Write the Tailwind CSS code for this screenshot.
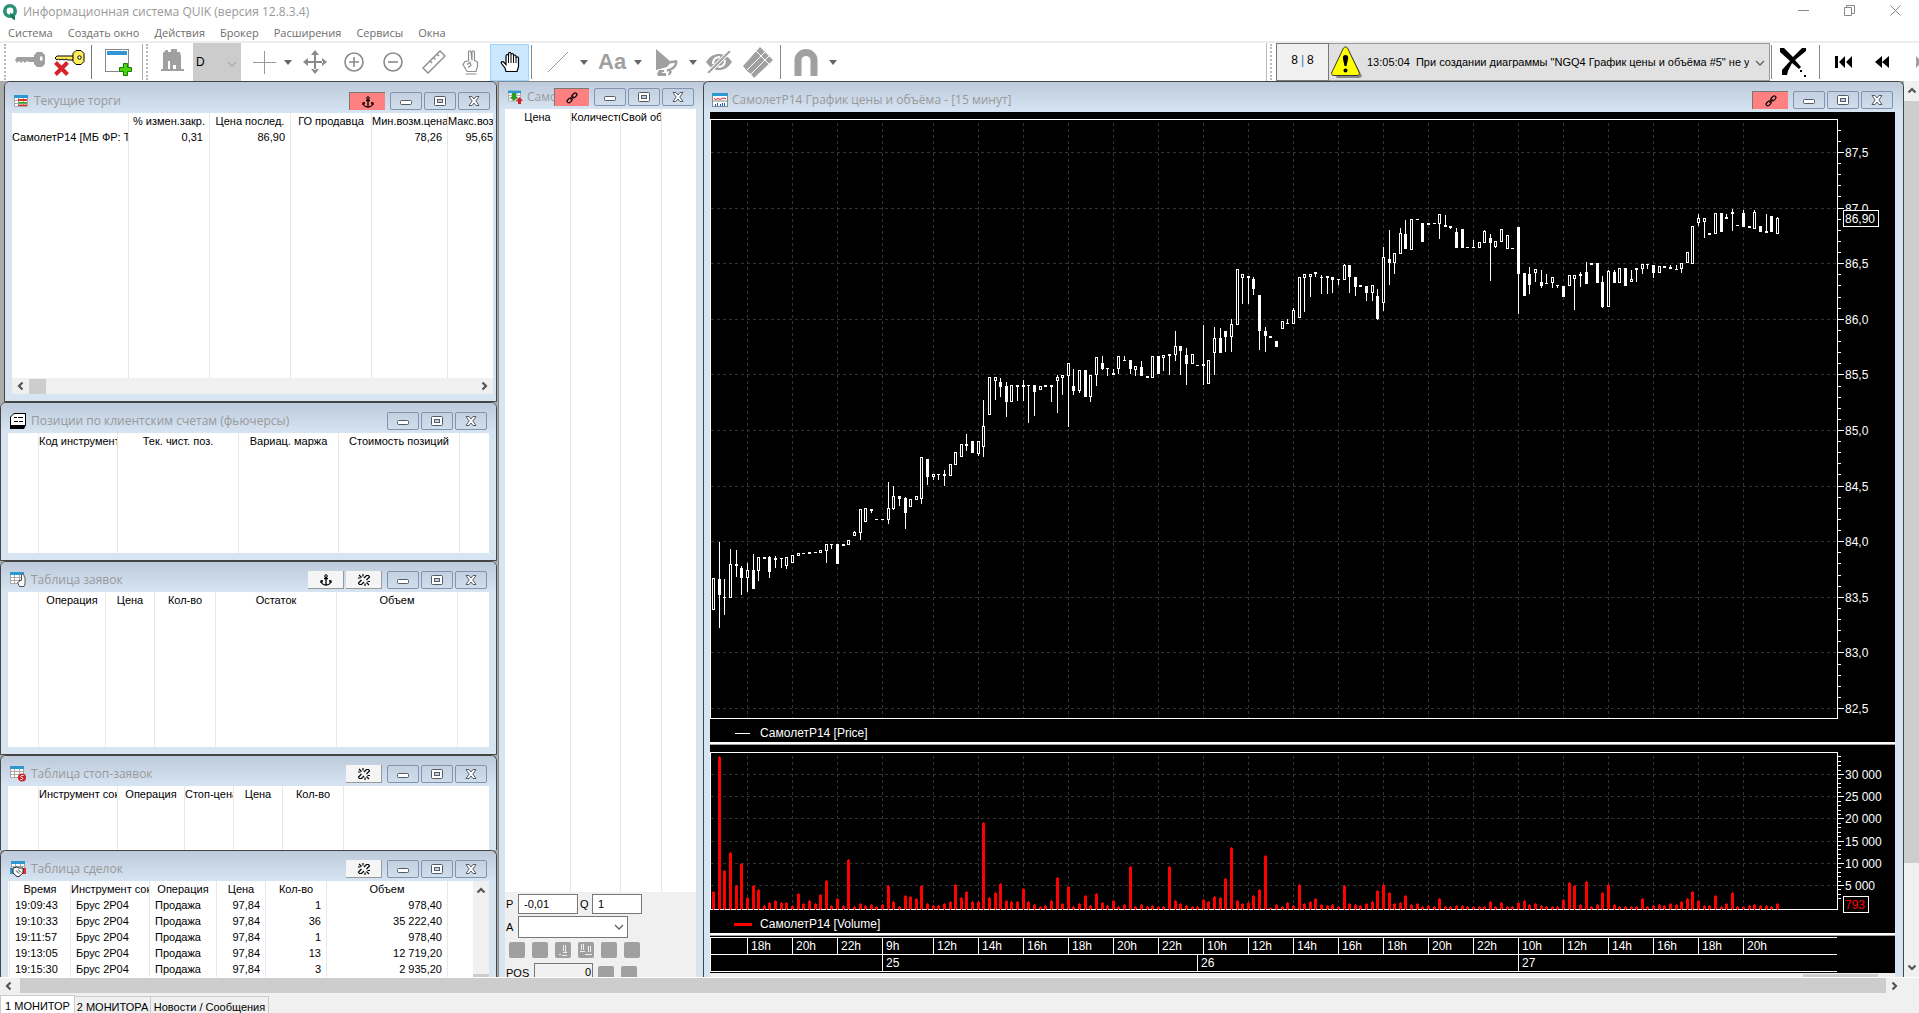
<!DOCTYPE html>
<html lang="ru">
<head>
  <meta charset="UTF-8">
  <meta name="viewport" content="width=device-width, initial-scale=1.0">
  <title>Информационная система QUIK</title>
  <script src="https://cdn.jsdelivr.net/npm/@tailwindcss/browser@4"></script>
</head>
<body class="h-screen flex flex-col overflow-hidden bg-white text-black text-[11px] leading-4 font-['Liberation_Sans',Arial,sans-serif]">

  <!-- icon sprites -->
  <svg class="hidden">
    <symbol id="i-anchor" viewBox="0 0 12 12"><path d="M6 3v8M4 4.500h4M1.500 7.500c0 2 2 3.500 4.500 3.500s4.500-1.500 4.500-3.500M1 9V7h2M11 9V7H9" fill="none" stroke="#000" stroke-width="1.300"/><circle cx="6" cy="2" r="1.300" fill="none" stroke="#000"/></symbol>
    <symbol id="i-link" viewBox="0 0 12 12"><g fill="none" stroke="#000" stroke-width="1.200"><rect x="-2.800" y="-1.700" width="5.600" height="3.400" rx="1.700" transform="translate(8.400 3.400) rotate(-45)"/><rect x="-2.800" y="-1.700" width="5.600" height="3.400" rx="1.700" transform="translate(3.600 8.400) rotate(-45)"/><path d="M4.500 7.500l3-3"/></g></symbol>
    <symbol id="i-unlink" viewBox="0 0 14 12"><g fill="none" stroke="#000" stroke-width="1.200"><path d="M7 4l2.500-2.500h2L12.500 3l-3 3M7 8l-2.500 2.500h-2L1.500 9l3-3M2 1l2.500 2.500M6 0v2.500M1 4h2.500M9.500 8.500L12 11M8 9.500V12M10.500 7.500H13"/></g></symbol>
    <symbol id="i-min" viewBox="0 0 12 12"><rect x=".5" y="5.500" width="11" height="4" rx="1" fill="#fff" stroke="#555b66"/></symbol>
    <symbol id="i-max" viewBox="0 0 12 12"><rect x=".5" y="1.500" width="11" height="9" rx="1" fill="#fff" stroke="#555b66"/><rect x="3.500" y="4.500" width="5" height="3" fill="#c3d1e2" stroke="#555b66"/></symbol>
    <symbol id="i-close" viewBox="0 0 12 12"><path d="M1 1.500h3l2 2.500 2-2.500h3L7.800 6l3.200 4.500H8L6 8l-2 2.500H1L4.200 6z" fill="#fff" stroke="#555b66"/></symbol>
    <symbol id="i-down" viewBox="0 0 8 5"><path d="M0 0h8L4 5z" fill="#666"/></symbol>
    <symbol id="i-chev" viewBox="0 0 10 10"><path d="M1 3l4 4 4-4" fill="none" stroke="currentColor" stroke-width="1.300"/></symbol>
    <symbol id="i-arrow" viewBox="0 0 10 10"><path d="M7.500 1.500L4 5l3.500 3.500" fill="none" stroke="#555" stroke-width="2.200"/></symbol>
    <symbol id="i-grid" viewBox="0 0 14 12"><rect width="14" height="12" fill="#fff"/><path d="M.5.500v11h13v-11M4.500 2v10M9.500 2v10M0 5.500h14M0 8.500h14" fill="none" stroke="#a8a8a8"/><rect width="14" height="3" fill="#2f97cf"/></symbol>
  </svg>

  <!-- title bar -->
  <header class="flex h-6 shrink-0 items-center pl-[3px] pr-[18px] font-['Open_Sans','Noto_Sans',sans-serif] text-[12px] text-[#999]">
    <svg class="h-4 w-[14px]" viewBox="0 0 14 16"><circle cx="7" cy="7" r="5.200" fill="none" stroke="#2a9175" stroke-width="3.600"/><path d="M7 8.500l5 4v3.500c-3-.5-5-3.500-5-7.500z" fill="#1c7a5c"/></svg>
    <h1 class="ml-[6px] whitespace-nowrap">Информационная система QUIK (версия 12.8.3.4)</h1>
    <div class="ml-auto flex items-center gap-[35px] pb-1">
      <button aria-label="Свернуть"><svg class="size-[11px]" viewBox="0 0 11 11"><path d="M0 5.500h11" stroke="#888"/></svg></button>
      <button aria-label="Восстановить"><svg class="size-[11px]" viewBox="0 0 11 11" fill="none" stroke="#888"><path d="M.5 2.500h7v8h-7zM2.500 2.500v-2h8v8h-3"/></svg></button>
      <button aria-label="Закрыть"><svg class="size-[11px]" viewBox="0 0 11 11"><path d="M.5.500l10 10M10.500.500l-10 10" stroke="#888"/></svg></button>
    </div>
  </header>

  <nav class="flex h-[17px] shrink-0 items-center gap-[15px] pl-2 font-['Open_Sans','Noto_Sans',sans-serif] text-[11px] text-[#6d6d6d]">
    <a href="#">Система</a><a href="#">Создать окно</a><a href="#">Действия</a><a href="#">Брокер</a><a href="#">Расширения</a><a href="#">Сервисы</a><a href="#">Окна</a>
  </nav>

  <!-- toolbar -->
  <div class="flex h-10 shrink-0 items-center overflow-hidden border-t-2 border-[#ededed]">
    <div class="ml-1 h-9 w-[2px] border-l-2 border-dotted border-[#bbb]"></div>
    <button class="ml-[9px] pb-1" aria-label="Подключиться"><svg class="h-4 w-[30px]" viewBox="0 0 30 16" fill="#a0a0a0"><path d="M20 5H2L0 8l2 3 2-2 2 2 2-2 2 2 2-2 2 1h6z"/><path fill-rule="evenodd" d="M22 0h5l3 3v9l-3 3h-5l-3-3V3zm3 4.500v4h2.500v-4z"/></svg></button>
    <button class="ml-[9px]" aria-label="Отключиться"><svg class="h-7 w-[31px]" viewBox="0 0 31 28"><path d="M21 8H3l-2 2 2 2 1.500-1L6 12l2-1 2 1 2-1 2 1h7z" fill="#ffef5a" stroke="#000"/><path d="M22 2.500h5l3 3v8l-3 3h-5l-3-3v-8z" fill="#ffef5a" stroke="#000"/><circle cx="25.500" cy="9.500" r="1.700" fill="#fff" stroke="#000"/><path d="M1.500 14.500l12 12M13.500 14.500l-12 12" stroke="#d8222c" stroke-width="4"/></svg></button>
    <div class="ml-[6px] h-[34px] border-l border-[#777]"></div>
    <button class="ml-[13px]" aria-label="Создать окно"><svg class="h-7 w-[27px]" viewBox="0 0 27 28"><rect x=".5" y="1.500" width="23" height="22" fill="#fff" stroke="#888"/><rect x="2" y="3" width="20" height="4" fill="#2f97d3"/><path d="M18.500 15.500h4v4h4v4h-4v4h-4v-4h-4v-4h4z" fill="#4ad40b" stroke="#1e7a05"/></svg></button>
    <div class="ml-[10px] h-9 border-l border-[#aaa]"></div>
    <div class="ml-[3px] h-9 w-[2px] border-l-2 border-dotted border-[#bbb]"></div>
    <button class="ml-[13px] pb-1" aria-label="Биржа"><svg class="h-[22px] w-[23px]" viewBox="0 0 23 22" fill="#a0a0a0"><path fill-rule="evenodd" d="M3 3l2-2h2v2h3V0h6v3h3l1 4v13h3v2H0V20h2V4zM7 12v8h2v-8zm5 4v4h3v-4z"/></svg></button>
    <div class="relative ml-[9px] h-full">
      <select aria-label="Таймфрейм" class="h-full w-12 appearance-none bg-[#ccc] pl-[3px] text-[12px]"><option>D</option></select>
      <svg class="pointer-events-none absolute right-1 top-4 size-[10px] text-[#aaa]"><use href="#i-chev"/></svg>
    </div>
    <button class="ml-[12px]" aria-label="Курсор"><svg class="size-[23px]" viewBox="0 0 23 23"><path d="M0 11.500h23M11.500 0v23" stroke="#999"/></svg></button>
    <svg class="ml-2 h-[5px] w-2"><use href="#i-down"/></svg>
    <button class="ml-[11px]" aria-label="Переместить"><svg class="size-6" viewBox="0 0 24 24" fill="#8a8a8a"><path d="M11 4h2v7h7v2h-7v7h-2v-7H4v-2h7zM12 0l4 5H8zM12 24l4-5H8zM0 12l5-4v8zM24 12l-5-4v8z"/></svg></button>
    <button class="ml-[17px]" aria-label="Увеличить"><svg class="size-5" viewBox="0 0 20 20" fill="none" stroke="#8a8a8a" stroke-width="1.600"><circle cx="10" cy="10" r="9"/><path d="M5 10h10M10 5v10"/></svg></button>
    <button class="ml-[19px]" aria-label="Уменьшить"><svg class="size-5" viewBox="0 0 20 20" fill="none" stroke="#8a8a8a" stroke-width="1.600"><circle cx="10" cy="10" r="9"/><path d="M5 10h10"/></svg></button>
    <button class="ml-[19px]" aria-label="Линейка"><svg class="size-6" viewBox="0 0 24 24" fill="none" stroke="#909090" stroke-width="1.500"><path d="M1 18L18 1l5 5L6 23zM8.500 11.500l1.500 1.500M12 8l1.500 1.500M15.500 4.500L17 6"/></svg></button>
    <button class="ml-4" aria-label="Жест"><svg class="h-[25px] w-[17px]" viewBox="0 0 17 25" fill="none" stroke="#8f8f8f" stroke-width="1.200"><path d="M3.500 24h11M5 21.500h9l1.500-5V12l-2-1 -1-.5V2c0-1.500-2.500-1.500-2.500 0v8.500L9 2c0-1.500-2.500-1.500-2.500 0v9L3 11.500l-2 3 4 7M5 14.500l3-2 1 3-3 2"/></svg></button>
    <button class="ml-[11px] flex h-[37px] w-[39px] items-center justify-center border border-[#99d1ff] bg-[#cce8ff]" aria-label="Рука"><svg class="h-[21px] w-5" viewBox="0 0 20 21"><path d="M6 19.500L5 16l-3.500-4.500c-1-1.500 1-2.500 2-1.500L6 12.500V4c0-2 2.500-2 2.500 0V2c0-2 2.500-2 2.500 0v1c0-2 2.500-2 2.500 0v1.500c0-2 2.500-2 2.500 0V6c0-1.500 2.500-1.500 2.500 0v9l-1.500 4.500z" fill="#fff" stroke="#000" stroke-width="1.200"/><path d="M8.500 4v7M11 3v8M13.500 4v7M16 6v5" stroke="#000"/></svg></button>
    <div class="ml-[2px] h-[34px] border-l border-[#888]"></div>
    <button class="ml-4" aria-label="Линия"><svg class="size-5" viewBox="0 0 20 20"><path d="M0 20L20 0" stroke="#999"/></svg></button>
    <svg class="ml-3 h-[5px] w-2"><use href="#i-down"/></svg>
    <button class="ml-[10px] w-7 text-[22px] leading-6 font-bold text-[#a0a0a0]">Aa</button>
    <svg class="ml-2 h-[5px] w-2"><use href="#i-down"/></svg>
    <button class="ml-[13px]" aria-label="Фигуры"><svg class="h-[27px] w-[23px]" viewBox="0 0 23 27"><path d="M1 0l15 13-4 5-11 3z" fill="#a0a0a0"/><path d="M13 13.500l8-1c1 4-3 8-9 9" fill="none" stroke="#a0a0a0" stroke-width="2.500"/><path d="M4 21h5v2H7v1h4v3H3l-1-2zM15 20l2 3-2 3h-2z" fill="#a0a0a0"/></svg></button>
    <svg class="ml-[11px] h-[5px] w-2"><use href="#i-down"/></svg>
    <button class="ml-2" aria-label="Скрыть"><svg class="h-[22px] w-7" viewBox="0 0 28 22"><path d="M1 11c4-6 8-8 13-8s9 2 13 8c-4 6-8 8-13 8S5 17 1 11z" fill="#a0a0a0"/><path d="M8 13c0-5 3-7 7-7M20 9c0 5-3 7-7 7" stroke="#fff" stroke-width="2" fill="none"/><path d="M3 22L25 0" stroke="#fff" stroke-width="4"/><path d="M3 22L25 0" stroke="#a0a0a0" stroke-width="2"/></svg></button>
    <button class="ml-[9px]" aria-label="Карандаши"><svg class="h-8 w-8" viewBox="0 0 32 32"><path d="M1 20L18 1l13 13-19 18-3-4-4-3z" fill="#a0a0a0"/><path d="M5 24L23 6M9 28L27 10M14 5l13 13" stroke="#fff" stroke-width="1"/></svg></button>
    <div class="ml-[6px] h-[34px] border-l border-[#888]"></div>
    <button class="ml-[13px]" aria-label="Магнит"><svg class="h-7 w-6" viewBox="0 0 24 28"><path d="M4 28V12a8 7.500 0 0 1 16 0v16" fill="none" stroke="#a0a0a0" stroke-width="7"/></svg></button>
    <svg class="ml-[11px] h-[5px] w-2"><use href="#i-down"/></svg>

    <div class="ml-auto h-full border-l border-[#bbb]"></div>
    <div class="ml-[3px] h-9 w-[2px] border-l-2 border-dotted border-[#bbb]"></div>
    <output class="ml-1 flex h-full w-[53px] items-center justify-center border border-[#777] bg-[#f0f0f0] pb-1 text-[12px]">8<span class="mx-[3px] text-[#3a7bb5]">|</span>8</output>
    <div class="relative flex h-full w-[441px] items-center border border-l-0 border-[#999] bg-[#e1e1e1]">
      <svg class="ml-[2px] h-8 w-8 shrink-0" viewBox="0 0 32 32"><path d="M17 3l14 27-2 2H5z" fill="#888"/><path d="M14.500 1c1 0 2 .5 2.500 2l11 23c1 2 0 3.500-2 3.500H3c-2 0-3-1.500-2-3.500L12 3c.5-1.500 1.500-2 2.500-2z" fill="#ff0" stroke="#333"/><path d="M14.500 9c2 0 3 1 2.500 4l-1.500 7h-2L12 13c-.5-3 .5-4 2.500-4z"/><circle cx="14.500" cy="24.500" r="2"/></svg>
      <select aria-label="Сообщения" class="w-[386px] shrink-0 appearance-none overflow-hidden pl-1 text-[11px] whitespace-pre"><option>13:05:04&nbsp; При создании диаграммы "NGQ4 График цены и объёма #5" не удалось</option></select>
      <svg class="pointer-events-none absolute right-1 top-[14px] size-[10px] text-[#606060]"><use href="#i-chev"/></svg>
    </div>
    <div class="ml-px h-[34px] border-l border-[#888]"></div>
    <button class="ml-2" aria-label="Очистить"><svg class="h-[33px] w-[27px]" viewBox="0 0 27 33"><path d="M0 2h4l9 9 9-9h4v3L15 14l6 7-2 2-7-6-4 8-1 4H2v-5l8-9L0 6z"/><path d="M20 24h2v2h-2zM24 29h2v2h-2z"/></svg></button>
    <div class="ml-3 h-[34px] border-l border-[#888]"></div>
    <button class="ml-[15px]" aria-label="В начало"><svg class="h-3 w-[17px]" viewBox="0 0 17 12"><path d="M0 0h3v12H0zM10 0v12L4 6zM17 0v12L11 6z"/></svg></button>
    <button class="ml-[23px]" aria-label="Назад"><svg class="h-3 w-[14px]" viewBox="0 0 14 12"><path d="M7 0v12L0 6zM14 0v12L7 6z"/></svg></button>
    <svg class="ml-[27px] h-3 w-[3px]" viewBox="0 0 3 12"><path d="M0 0l3 3v6l-3 3z" fill="#a0a0a0"/></svg>
  </div>

  <!-- workspace -->
  <main class="flex min-h-0 flex-1 bg-[#ababab]">
    <div class="flex w-[498px] shrink-0 flex-col pr-px">

      <section class="ml-1 flex h-[321px] shrink-0 flex-col rounded-t-[6px] border border-[#444] bg-[#d7e4f2] pl-[7px] pr-[3px]">
        <div class="-ml-[7px] -mr-[3px] flex h-[31px] shrink-0 items-center rounded-t-[5px] bg-linear-to-b from-[#bccadb] to-[#d7e4f2] pl-[9px] pr-[6px] pt-[7px]">
          <svg class="h-3 w-[14px]" viewBox="0 0 14 12"><use href="#i-grid"/><path d="M4 4h9v2H4z" fill="#d32"/><path d="M4 7h9v1.500H4z" fill="#2a2"/><path d="M4 9.500h9V11H4z" fill="#d32"/></svg>
          <h2 class="ml-[6px] flex-1 font-['Open_Sans','Noto_Sans',sans-serif] text-[12px] text-[#999]">Текущие торги</h2>
          <button class="mr-[5px] flex h-[18px] w-9 items-center justify-center border-t border-l border-[#777] bg-[#ff8080]" aria-label="Закрепить"><svg class="size-3"><use href="#i-anchor"/></svg></button>
          <div data-captions class="flex gap-[2px]"></div>
        </div>
        <div data-table="quotes" class="min-h-0 flex-1 overflow-hidden bg-white"></div>
        <div class="mb-[7px] flex h-4 shrink-0 items-center bg-[#f0f0f0]">
          <svg class="ml-[3px] size-[10px]"><use href="#i-arrow"/></svg>
          <div class="ml-1 h-[15px] w-[17px] bg-[#cdcdcd]"></div>
          <svg class="ml-auto mr-[3px] size-[10px] rotate-180"><use href="#i-arrow"/></svg>
        </div>
      </section>

      <section class="flex h-[159px] shrink-0 flex-col rounded-t-[6px] border border-[#444] bg-[#d7e4f2] px-[7px]">
        <div class="-mx-[7px] flex h-[30px] shrink-0 items-center rounded-t-[5px] bg-linear-to-b from-[#bccadb] to-[#d7e4f2] pl-[9px] pr-[9px] pt-[6px]">
          <svg class="size-4" viewBox="0 0 16 16"><path d="M4 0h12v12l-2 4H0V4z"/><path d="M4 1h11v11H1V4z" fill="#fff"/><path d="M4 4.500h3M8 4.500h5M4 8.500h4M9 8.500h4" stroke="#000"/></svg>
          <h2 class="ml-[5px] flex-1 font-['Open_Sans','Noto_Sans',sans-serif] text-[12px] text-[#999]">Позиции по клиентским счетам (фьючерсы)</h2>
          <div data-captions class="flex gap-[2px]"></div>
        </div>
        <div data-table="positions" class="mb-[7px] min-h-0 flex-1 overflow-hidden bg-white"></div>
      </section>

      <section class="flex h-[194px] shrink-0 flex-col rounded-t-[6px] border border-[#444] bg-[#d7e4f2] px-[7px]">
        <div class="-mx-[7px] flex h-[30px] shrink-0 items-center rounded-t-[5px] bg-linear-to-b from-[#bccadb] to-[#d7e4f2] pl-[9px] pr-[9px] pt-[6px]">
          <svg class="size-4" viewBox="0 0 16 16"><use href="#i-grid" width="14" height="12"/><path d="M9.500 14.500l-2-4 2-1V8l2 .5V3c0-1 2.500-1 2.500 0v1.500l1 .5v7l-1 2.500z" fill="#fff" stroke="#555"/></svg>
          <h2 class="ml-[5px] flex-1 font-['Open_Sans','Noto_Sans',sans-serif] text-[12px] text-[#999]">Таблица заявок</h2>
          <button class="mr-[2px] flex h-[18px] w-9 items-center justify-center border-r border-b border-[#999] bg-[#f5f5f5]" aria-label="Закрепить"><svg class="size-3"><use href="#i-anchor"/></svg></button>
          <button class="mr-[5px] flex h-[18px] w-9 items-center justify-center border-r border-b border-[#999] bg-[#f5f5f5]" aria-label="Связать"><svg class="h-3 w-[14px]"><use href="#i-unlink"/></svg></button>
          <div data-captions class="flex gap-[2px]"></div>
        </div>
        <div data-table="orders" class="mb-[7px] min-h-0 flex-1 overflow-hidden bg-white"></div>
      </section>

      <section class="flex h-[95px] shrink-0 flex-col rounded-t-[6px] border border-b-0 border-[#444] bg-[#d7e4f2] px-[7px]">
        <div class="-mx-[7px] flex h-[30px] shrink-0 items-center rounded-t-[5px] bg-linear-to-b from-[#bccadb] to-[#d7e4f2] pl-[9px] pr-[9px] pt-[6px]">
          <svg class="size-4" viewBox="0 0 16 16"><use href="#i-grid" width="14" height="12"/><circle cx="12" cy="11.500" r="4" fill="#c9252c"/><path d="M13.500 9.500h-2l-1 1 2.500 2-1 1h-1.500" stroke="#fff" fill="none"/></svg>
          <h2 class="ml-[5px] flex-1 font-['Open_Sans','Noto_Sans',sans-serif] text-[12px] text-[#999]">Таблица стоп-заявок</h2>
          <button class="mr-[5px] flex h-[18px] w-9 items-center justify-center border-r border-b border-[#999] bg-[#f5f5f5]" aria-label="Связать"><svg class="h-3 w-[14px]"><use href="#i-unlink"/></svg></button>
          <div data-captions class="flex gap-[2px]"></div>
        </div>
        <div data-table="stops" class="min-h-0 flex-1 overflow-hidden bg-white"></div>
      </section>

      <section class="flex min-h-0 flex-1 flex-col overflow-hidden rounded-t-[6px] border border-b-0 border-[#444] bg-[#d7e4f2] px-[7px]">
        <div class="-mx-[7px] flex h-[30px] shrink-0 items-center rounded-t-[5px] bg-linear-to-b from-[#bccadb] to-[#d7e4f2] pl-[9px] pr-[9px] pt-[6px]">
          <svg class="size-4" viewBox="0 0 16 16"><use href="#i-grid" x="1" width="14" height="12"/><path d="M0 7h3v6H0z" fill="#2f97cf"/><path d="M13 7h3v6h-3z" fill="#d33"/><path d="M3 7l4-1 2 1 4 0v5l-4 3.500H7L3 12z" fill="#fff" stroke="#222"/><path d="M6 9.500l3 3M8 8.500l3 3" stroke="#222"/></svg>
          <h2 class="ml-[5px] flex-1 font-['Open_Sans','Noto_Sans',sans-serif] text-[12px] text-[#999]">Таблица сделок</h2>
          <button class="mr-[5px] flex h-[18px] w-9 items-center justify-center border-r border-b border-[#999] bg-[#f5f5f5]" aria-label="Связать"><svg class="h-3 w-[14px]"><use href="#i-unlink"/></svg></button>
          <div data-captions class="flex gap-[2px]"></div>
        </div>
        <div class="flex min-h-0 flex-1">
          <div data-table="trades" class="min-w-0 flex-1 overflow-hidden bg-white"></div>
          <div class="flex w-4 flex-col items-center bg-[#f0f0f0]">
            <svg class="mt-1 size-[10px] rotate-90"><use href="#i-arrow"/></svg>
            <div class="mt-auto h-[3px] w-full bg-[#cdcdcd]"></div>
          </div>
        </div>
      </section>
    </div>

    <!-- order book -->
    <section class="flex w-[205px] shrink-0 flex-col border-t border-l border-[#888] bg-[#d7e4f2] pl-[6px] pr-[7px]">
      <div class="-ml-[6px] -mr-[7px] flex h-[27px] shrink-0 items-center bg-linear-to-b from-[#bccadb] to-[#d7e4f2] pl-[9px] pr-[9px] pt-[3px]">
        <svg class="h-[14px] w-[15px] shrink-0" viewBox="0 0 15 14"><use href="#i-grid" width="13" height="12"/><path d="M4 3h4v4h2L6 11 2 7h2z" fill="#2a9b1a"/><path d="M11.500 7l3.500 4h-2v3h-3v-3H8z" fill="#d01f26"/></svg>
        <h2 class="ml-1 w-[27px] overflow-hidden font-['Open_Sans','Noto_Sans',sans-serif] text-[12px] text-[#999]">СамолетР14</h2>
        <button class="ml-auto mr-[5px] flex h-[18px] w-9 items-center justify-center border-t border-l border-[#777] bg-[#ff8080]" aria-label="Связать"><svg class="size-3"><use href="#i-link"/></svg></button>
        <div data-captions class="flex gap-[2px]"></div>
      </div>
      <div data-table="book" class="min-h-0 flex-1 overflow-hidden bg-white"></div>
      <form class="h-[85px] shrink-0 overflow-hidden bg-[#f0f0f0] pt-[2px]">
        <div class="flex h-5 items-center">
          <label for="price" class="w-[13px] pl-px">P</label>
          <input id="price" value="-0,01" class="h-5 w-[60px] border border-[#777] bg-white pl-[5px]">
          <label for="qty" class="w-[14px] pl-[2px]">Q</label>
          <input id="qty" value="1" class="h-5 w-[50px] border border-[#777] bg-white pl-[5px]">
        </div>
        <div class="relative mt-[2px] flex h-[22px] w-[123px] items-center">
          <label for="account" class="w-[13px] pl-px">A</label>
          <select id="account" class="h-[22px] w-[110px] appearance-none border border-[#777] bg-white"><option></option></select>
          <svg class="pointer-events-none absolute right-1 top-[6px] size-[10px] text-[#606060]"><use href="#i-chev"/></svg>
        </div>
        <div class="mt-1 flex gap-[7px] pl-1">
          <button class="size-4 rounded-[2px] bg-[#a0a0a0]" aria-label="Купить"></button>
          <button class="size-4 rounded-[2px] bg-[#a0a0a0]" aria-label="Продать"></button>
          <button class="size-4 rounded-[2px] bg-[#a0a0a0]" aria-label="Снять"><svg class="size-4" viewBox="0 0 16 16" fill="none" stroke="#eee"><path d="M8.500 3v6M10.500 3v7M4 12.500h2M8 10.500h4M7 13.500h5"/></svg></button>
          <button class="size-4 rounded-[2px] bg-[#a0a0a0]" aria-label="Снять все"><svg class="size-4" viewBox="0 0 16 16" fill="none" stroke="#eee"><path d="M3.500 2v6M5.500 2v6M10.500 4v6M12.500 4v6M2 9.500h5M7 12.500h7"/></svg></button>
          <button class="size-4 rounded-[2px] bg-[#a0a0a0]" aria-label="Стоп"></button>
          <button class="size-4 rounded-[2px] bg-[#a0a0a0]" aria-label="Лимит"></button>
        </div>
        <div class="mt-[5px] flex">
          <label for="pos" class="w-[29px] pt-[2px] pl-px">POS</label>
          <input id="pos" value="0" readonly class="h-[18px] w-[59px] border border-[#777] bg-[#f0f0f0] pr-px text-right">
          <button class="mt-[3px] ml-[5px] size-4 rounded-[2px] bg-[#a0a0a0]" aria-label="Закрыть позицию"></button>
          <button class="mt-[3px] ml-[7px] size-4 rounded-[2px] bg-[#a0a0a0]" aria-label="Перевернуть"></button>
        </div>
      </form>
    </section>

    <!-- chart -->
    <section class="flex min-w-0 flex-1 flex-col overflow-hidden rounded-t-[6px] border-x border-t border-[#444] bg-[#d7e4f2] pl-[6px] pr-2">
      <div class="-ml-[6px] -mr-2 flex h-[30px] shrink-0 items-center bg-linear-to-b from-[#bccadb] to-[#d7e4f2] pl-2 pr-[10px] pt-[6px]">
        <svg class="h-[14px] w-4" viewBox="0 0 16 14"><rect x=".5" y=".5" width="15" height="13" fill="#fff" stroke="#888"/><rect width="16" height="3" fill="#2f97cf"/><path d="M2 5.500l2 1 2-1 2 1 3-1.500 3 .5" fill="none" stroke="#d22"/><path d="M1 8h14" stroke="#888"/><path d="M3.500 13v-2M5.500 13v-3M8.500 13v-2M10.500 13v-3M12.500 13v-3" stroke="#15c"/></svg>
        <h2 class="ml-1 flex-1 font-['Open_Sans','Noto_Sans',sans-serif] text-[12px] text-[#999]">СамолетР14 График цены и объёма - [15 минут]</h2>
        <button class="mr-[5px] flex h-[18px] w-9 items-center justify-center border-t border-l border-[#777] bg-[#ff8080]" aria-label="Связать"><svg class="size-3"><use href="#i-link"/></svg></button>
        <div data-captions class="flex gap-[2px]"></div>
      </div>
      <div class="flex min-h-0 flex-1 flex-col overflow-hidden bg-black">
        <svg id="pricePane" class="h-[630px] w-full shrink-0" font-size="12" shape-rendering="crispEdges"></svg>
        <div class="h-[3px] shrink-0 border-t-2 border-white bg-[#a0a0a0]"></div>
        <svg id="volumePane" class="h-[188px] w-full shrink-0" font-size="12" shape-rendering="crispEdges"></svg>
        <div class="h-[3px] shrink-0 border-t-2 border-white bg-[#a0a0a0]"></div>
        <svg id="timePane" class="h-[37px] w-full shrink-0" font-size="12" shape-rendering="crispEdges"></svg>
        <div class="flex flex-1 bg-[#f0f0f0]"><div class="mt-px mr-[17px] ml-auto w-[75px] bg-[#cdcdcd]"></div></div>
      </div>
    </section>

    <div class="flex w-[15px] shrink-0 flex-col items-center bg-[#f0f0f0]">
      <svg class="mt-1 size-[10px] shrink-0 rotate-90"><use href="#i-arrow"/></svg>
      <div class="mt-[6px] h-[85%] w-full bg-[#cdcdcd]"></div>
      <svg class="mt-auto mb-1 size-[10px] shrink-0 -rotate-90"><use href="#i-arrow"/></svg>
    </div>
  </main>

  <div class="flex h-4 shrink-0 items-center border-t border-white bg-[#f0f0f0]">
    <svg class="ml-[3px] size-[10px]"><use href="#i-arrow"/></svg>
    <div class="mr-1 ml-[7px] h-full flex-1 bg-[#cdcdcd]"></div>
    <svg class="mr-[19px] size-[10px] rotate-180"><use href="#i-arrow"/></svg>
  </div>

  <footer class="flex h-5 shrink-0 items-end overflow-hidden bg-[#f0f0f0]">
    <button class="h-[18px] w-[75px] border-x border-t border-[#ccc] bg-white pt-[2px] whitespace-nowrap">1 МОНИТОР</button>
    <button class="h-[17px] w-[76px] border-t border-r border-[#ccc] pt-[2px] whitespace-nowrap">2 МОНИТОРА</button>
    <button class="h-[17px] w-[118px] border-t border-r border-[#ccc] pt-[2px] whitespace-nowrap">Новости / Сообщения</button>
  </footer>

  <script>
    const captionButtons = [['Свернуть', '#i-min'], ['Развернуть', '#i-max'], ['Закрыть', '#i-close']];
    document.querySelectorAll('[data-captions]').forEach(el => {
      el.innerHTML = captionButtons.map(([label, icon]) =>
        `<button aria-label="${label}" class="flex h-[18px] w-8 items-center justify-center rounded-[2px] border border-[#8293b0] bg-linear-to-b from-[#c3d0e0] to-[#d0deec]"><svg class="h-3 w-3"><use href="${icon}"/></svg></button>`
      ).join('');
    });

    // cols: [width, title, cell alignment]; width 0 takes what is left
    const R = 'text-right pr-[5px]', L = 'text-left pl-[5px]';
    const tables = {
      quotes: {
        cols: [[117, '', 'text-left'], [81, '% измен.закр.', 'text-right pr-[6px]'], [81, 'Цена послед.', R], [81, 'ГО продавца', R], [76, 'Мин.возм.цена', R], [0, 'Макс.возм.цена', 'text-right']],
        rows: [['СамолетР14 [МБ ФР: Т+', '0,31', '86,90', '', '78,26', '95,65']]
      },
      positions: { cols: [[31, ''], [79, 'Код инструмента'], [121, 'Тек. чист. поз.'], [100, 'Вариац. маржа'], [121, 'Стоимость позиций'], [0, '']], rows: [] },
      orders: { cols: [[31, ''], [67, 'Операция'], [49, 'Цена'], [61, 'Кол-во'], [121, 'Остаток'], [121, 'Объем'], [0, '']], rows: [] },
      stops: { cols: [[31, ''], [79, 'Инструмент сокр.'], [67, 'Операция'], [49, 'Стоп-цена'], [49, 'Цена'], [61, 'Кол-во'], [0, '']], rows: [] },
      trades: {
        cols: [[2, ''], [61, 'Время', L], [79, 'Инструмент сокр.', L], [67, 'Операция', L], [49, 'Цена', R], [61, 'Кол-во', R], [121, 'Объем', R], [0, '']],
        rows: [
          ['', '19:09:43', 'Брус 2Р04', 'Продажа', '97,84', '1', '978,40', ''],
          ['', '19:10:33', 'Брус 2Р04', 'Продажа', '97,84', '36', '35 222,40', ''],
          ['', '19:11:57', 'Брус 2Р04', 'Продажа', '97,84', '1', '978,40', ''],
          ['', '19:13:05', 'Брус 2Р04', 'Продажа', '97,84', '13', '12 719,20', ''],
          ['', '19:15:30', 'Брус 2Р04', 'Продажа', '97,84', '3', '2 935,20', '']
        ]
      },
      book: { cols: [[66, 'Цена'], [50, 'Количество'], [41, 'Свой об'], [0, '']], rows: [] }
    };
    for (const [name, t] of Object.entries(tables)) {
      const last = t.cols.length - 1;
      const line = i => i < last ? 'border-r border-[#e8e8e8]' : '';
      const head = t.cols.map(([w, title], i) => {
        const long = title.length * 6 > w && w > 0 && title.length > 8 || title.startsWith('Макс');
        return `<th scope="col" class="h-4 overflow-hidden p-0 font-normal whitespace-nowrap ${long ? 'text-left' : 'text-center'} ${line(i)}">${title}</th>`;
      }).join('');
      const body = t.rows.map(r => '<tr>' + r.map((c, i) =>
        `<td class="h-4 overflow-hidden py-0 whitespace-nowrap ${t.cols[i][2] || 'px-0'} ${line(i)}">${c}</td>`).join('') + '</tr>').join('');
      const filler = '<tr class="h-full">' + t.cols.map((c, i) => `<td class="p-0 ${line(i)}"></td>`).join('') + '</tr>';
      document.querySelector(`[data-table="${name}"]`).innerHTML =
        `<table class="h-full w-full table-fixed border-separate border-spacing-0"><colgroup>${t.cols.map(([w]) => w ? `<col style="width:${w}px">` : '<col>').join('')}</colgroup><thead><tr>${head}</tr></thead><tbody>${body}${filler}</tbody></table>`;
    }

    // high, open/close top, open/close bottom, low (pane px), filled
    const candles = `459,459,491,491,0 423,460,476,509,1 460,478,479,496,1 430,445,479,479,0 431,445,447,458,1 447,449,459,476,1 444,451,459,473,0 435,451,470,470,1 438,438,452,462,0 438,438,440,440,1
437,438,453,459,1 437,439,441,449,1 439,439,440,449,1 438,438,447,450,0 436,436,444,444,0 434,434,437,437,0 434,434,435,435,1 433,433,435,435,1 433,433,434,434,1 431,431,434,434,0
425,425,432,444,0 425,425,426,430,1 425,425,445,445,1 425,425,427,427,1 421,421,426,426,0 412,413,417,417,0 390,390,414,421,0 389,389,403,403,0 390,390,392,394,1 400,400,401,401,1
400,400,401,401,1 363,389,401,405,0 367,377,390,391,0 377,377,380,387,1 378,379,394,410,1 380,380,388,388,0 377,377,381,381,0 338,338,380,385,0 340,340,358,366,1 355,355,358,361,0
355,355,356,361,1 351,355,357,367,1 345,345,357,357,0 333,333,346,346,0 325,325,338,338,0 315,325,327,332,1 322,322,334,334,1 322,322,335,337,0 281,307,328,338,0 258,258,296,296,0
258,258,262,281,0 259,263,268,278,1 263,267,283,298,1 266,266,283,283,0 266,266,268,282,1 261,266,268,282,1 266,266,267,304,1 266,266,273,297,1 267,267,271,271,0 266,266,268,268,1
266,266,268,283,1 256,258,262,294,0 256,256,259,276,0 244,244,257,308,0 250,267,272,276,1 251,251,272,274,0 251,251,278,278,1 256,256,278,283,0 238,238,256,267,0 237,244,250,251,1
249,249,250,257,1 250,254,256,256,1 237,237,250,255,0 237,241,242,242,1 241,241,250,255,1 247,247,251,257,0 242,248,257,257,1 257,257,259,259,1 237,237,259,259,0 237,237,255,255,1
236,236,239,252,0 235,235,237,256,1 212,227,236,242,0 227,227,232,256,1 229,236,245,266,1 235,235,245,245,0 246,246,247,247,1 206,245,247,266,1 241,241,265,265,0 208,219,234,256,0
209,219,234,234,1 212,212,218,233,1 200,205,218,233,0 150,150,206,206,0 155,155,159,185,0 157,157,159,185,1 158,160,170,176,1 176,176,212,231,1 208,212,217,233,1 217,217,219,219,1
222,222,228,228,1 202,202,210,210,0 200,204,205,205,1 189,191,205,205,0 158,158,199,199,0 155,155,159,193,0 155,155,158,178,0 153,153,155,158,1 156,158,159,175,1 157,157,159,175,1
158,158,161,174,1 160,160,161,166,1 145,146,161,161,0 146,146,158,174,1 158,158,168,177,1 166,166,168,168,1 167,167,174,182,1 166,166,174,182,0 170,177,200,201,1 128,138,184,192,0
111,140,144,166,1 134,134,144,155,0 109,114,135,135,0 101,115,130,130,1 100,100,131,131,0 100,100,101,101,1 104,104,123,123,1 104,104,106,106,1 104,104,105,105,1 95,95,105,120,0
96,106,108,108,1 107,107,109,110,1 109,113,129,129,1 110,110,129,129,1 128,128,129,129,1 121,128,129,129,1 123,123,129,129,0 111,112,124,124,0 115,119,124,162,1 122,122,128,129,0
110,110,123,123,0 116,116,130,130,0 129,129,130,130,1 108,108,155,195,1 154,154,177,177,1 148,155,166,175,1 150,150,154,163,0 151,163,167,169,1 155,164,165,165,1 158,158,164,169,0
166,166,167,169,1 167,167,178,178,1 156,156,167,167,0 156,156,160,191,0 153,155,157,168,1 143,153,165,165,1 144,144,146,146,1 144,144,164,164,1 157,163,188,189,1 151,152,188,188,0
151,153,164,164,1 149,149,164,164,0 149,149,167,167,1 151,160,163,163,0 149,149,151,163,1 145,145,150,155,0 145,145,146,150,1 146,146,154,159,1 147,147,154,154,0 147,147,149,149,1
146,148,150,150,1 146,150,151,151,1 144,144,150,154,0 133,133,144,144,0 107,107,145,145,0 95,99,104,107,0 99,99,103,119,0 114,114,116,116,1 94,94,115,115,0 94,94,113,113,1
95,98,100,100,1 90,93,95,112,1 106,106,107,107,1 91,94,108,108,1 107,107,109,109,1 91,93,110,110,0 107,107,113,113,1 95,112,114,114,1 97,97,113,113,1 98,99,115,115,0`
      .split(/\s+/).map(c => c.split(',').map(Number));

    const volumes = [
      18, 153, 39, 57, 24, 46, 12, 24, 20, 4, 7, 9, 7, 7, 4, 16, 6, 9, 6, 15, 29, 4, 11, 4, 50, 3, 6, 4, 5, 3,
      5, 24, 8, 3, 14, 13, 11, 24, 6, 4, 4, 6, 8, 25, 12, 18, 8, 8, 87, 12, 17, 26, 9, 8, 8, 21, 8, 5, 3, 4,
      9, 32, 6, 23, 3, 6, 14, 4, 16, 7, 4, 9, 3, 5, 43, 3, 5, 3, 4, 3, 3, 43, 9, 6, 4, 3, 3, 10, 8, 13,
      12, 31, 62, 9, 6, 7, 14, 20, 54, 2, 5, 3, 7, 4, 25, 6, 8, 11, 5, 4, 5, 3, 24, 6, 5, 4, 6, 8, 19, 25,
      17, 6, 7, 14, 5, 6, 3, 4, 3, 11, 3, 3, 4, 4, 3, 3, 3, 3, 8, 3, 7, 3, 3, 7, 9, 5, 6, 4, 3, 3,
      3, 10, 27, 24, 5, 28, 3, 5, 17, 25, 5, 3, 3, 3, 3, 11, 3, 4, 5, 4, 6, 5, 8, 11, 18, 9, 4, 4, 14, 3,
      6, 17, 3, 3, 4, 5, 4, 4, 3, 6
    ];

    const hours = [[6, '18h'], [14, '20h'], [22, '22h'], [30, '9h'], [39, '12h'], [47, '14h'], [55, '16h'], [63, '18h'], [71, '20h'], [79, '22h'],
      [87, '10h'], [95, '12h'], [103, '14h'], [111, '16h'], [119, '18h'], [127, '20h'], [135, '22h'],
      [143, '10h'], [151, '12h'], [159, '14h'], [167, '16h'], [175, '18h'], [183, '20h']];
    const days = [[30, '25'], [86, '26'], [143, '27']];

    const AXIS = 58;
    const barX = i => Math.round(3.2 + 5.628 * i);
    const rect = (x, y, w, h, fill = '#fff') => `<rect x="${x}" y="${y}" width="${w}" height="${h}" fill="${fill}"/>`;
    const text = (x, y, s, fill = '#fff') => `<text x="${x}" y="${y}" fill="${fill}">${s}</text>`;
    const frame = (x, y, w, h) => `<rect x="${x + 0.5}" y="${y + 0.5}" width="${w}" height="${h}" fill="#000" stroke="#fff"/>`;
    const dash = (x1, y1, x2, y2) => `<path d="M${x1} ${y1}L${x2} ${y2}" stroke="#333" stroke-dasharray="3 3"/>`;

    function grid(ys, right, top, bottom) {
      return ys.map(y => dash(1, y + 0.5, right, y + 0.5)).join('') +
        hours.map(([i]) => dash(barX(i) + 0.5, top + 3, barX(i) + 0.5, bottom)).join('');
    }

    function drawPrice() {
      const svg = document.getElementById('pricePane');
      const right = svg.clientWidth - AXIS;
      const levels = Array.from({ length: 11 }, (_, k) => Math.round(40 + k * 55.6));
      let out = grid(levels, right, 8, 606);
      out += rect(0, 7, right + 1, 1) + rect(0, 606, right + 1, 1) + rect(0, 7, 1, 600) + rect(right, 7, 1, 600);
      candles.forEach(([high, top, bottom, low, filled], i) => {
        const x = barX(i);
        if (top > high) out += rect(x, high + 7, 1, top - high);
        if (low > bottom) out += rect(x, bottom + 7, 1, low - bottom);
        out += rect(x - 1, top + 7, 3, bottom - top);
        if (!filled) out += rect(x, top + 8, 1, bottom - top - 2, '#000');
      });
      for (let k = -2; k <= 50; k++) {
        out += rect(right, Math.round(40 + k * 11.12), k % 5 ? 4 : 7, 1);
      }
      levels.forEach((y, k) => out += text(right + 8, y + 5, (87.5 - k / 2).toFixed(1).replace('.', ',')));
      out += frame(right + 6, 98, 35, 16) + text(right + 8, 111, '86,90');
      out += rect(25, 621, 15, 1) + text(50, 625, 'СамолетР14 [Price]');
      svg.innerHTML = out;
    }

    function drawVolume() {
      const svg = document.getElementById('volumePane');
      const right = svg.clientWidth - AXIS;
      const levels = [30, 25, 20, 15, 10, 5].map((v, k) => [Math.round(29 + k * 22.2), v + ' 000']);
      let out = grid(levels.map(l => l[0]), right, 8, 164);
      out += rect(0, 7, right + 1, 1) + rect(0, 164, right + 1, 1) + rect(0, 7, 1, 158) + rect(right, 7, 1, 158);
      volumes.forEach((h, i) => {
        const x = barX(i);
        out += rect(x, 164 - h, 1, 1, '#f00') + rect(x - 1, 165 - h, 3, h - 1, '#f00') + rect(x, 164, 1, 1, '#f00');
      });
      for (let k = -4; k <= 28; k++) out += rect(right, Math.round(29 + k * 4.44), 4, 1);
      levels.forEach(([y, label]) => out += rect(right, y, 7, 1) + text(right + 8, y + 5, label));
      out += frame(right + 6, 151, 25, 16) + text(right + 8, 164, '793', '#f00');
      out += rect(24, 178, 18, 3, '#f00') + text(50, 183, 'СамолетР14 [Volume]');
      svg.innerHTML = out;
    }

    function drawTime() {
      const svg = document.getElementById('timePane');
      const right = svg.clientWidth - AXIS;
      let out = [1, 18, 35].map(y => rect(0, y, right, 1)).join('') + rect(0, 1, 1, 35);
      hours.forEach(([i, label]) => out += rect(barX(i), 1, 1, 17) + text(barX(i) + 4, 14, label));
      days.forEach(([i, label]) => out += rect(barX(i), 18, 1, 17) + text(barX(i) + 4, 31, label));
      svg.innerHTML = out;
    }

    function draw() {
      drawPrice();
      drawVolume();
      drawTime();
    }
    new ResizeObserver(draw).observe(document.getElementById('pricePane'));
  </script>
</body>
</html>
